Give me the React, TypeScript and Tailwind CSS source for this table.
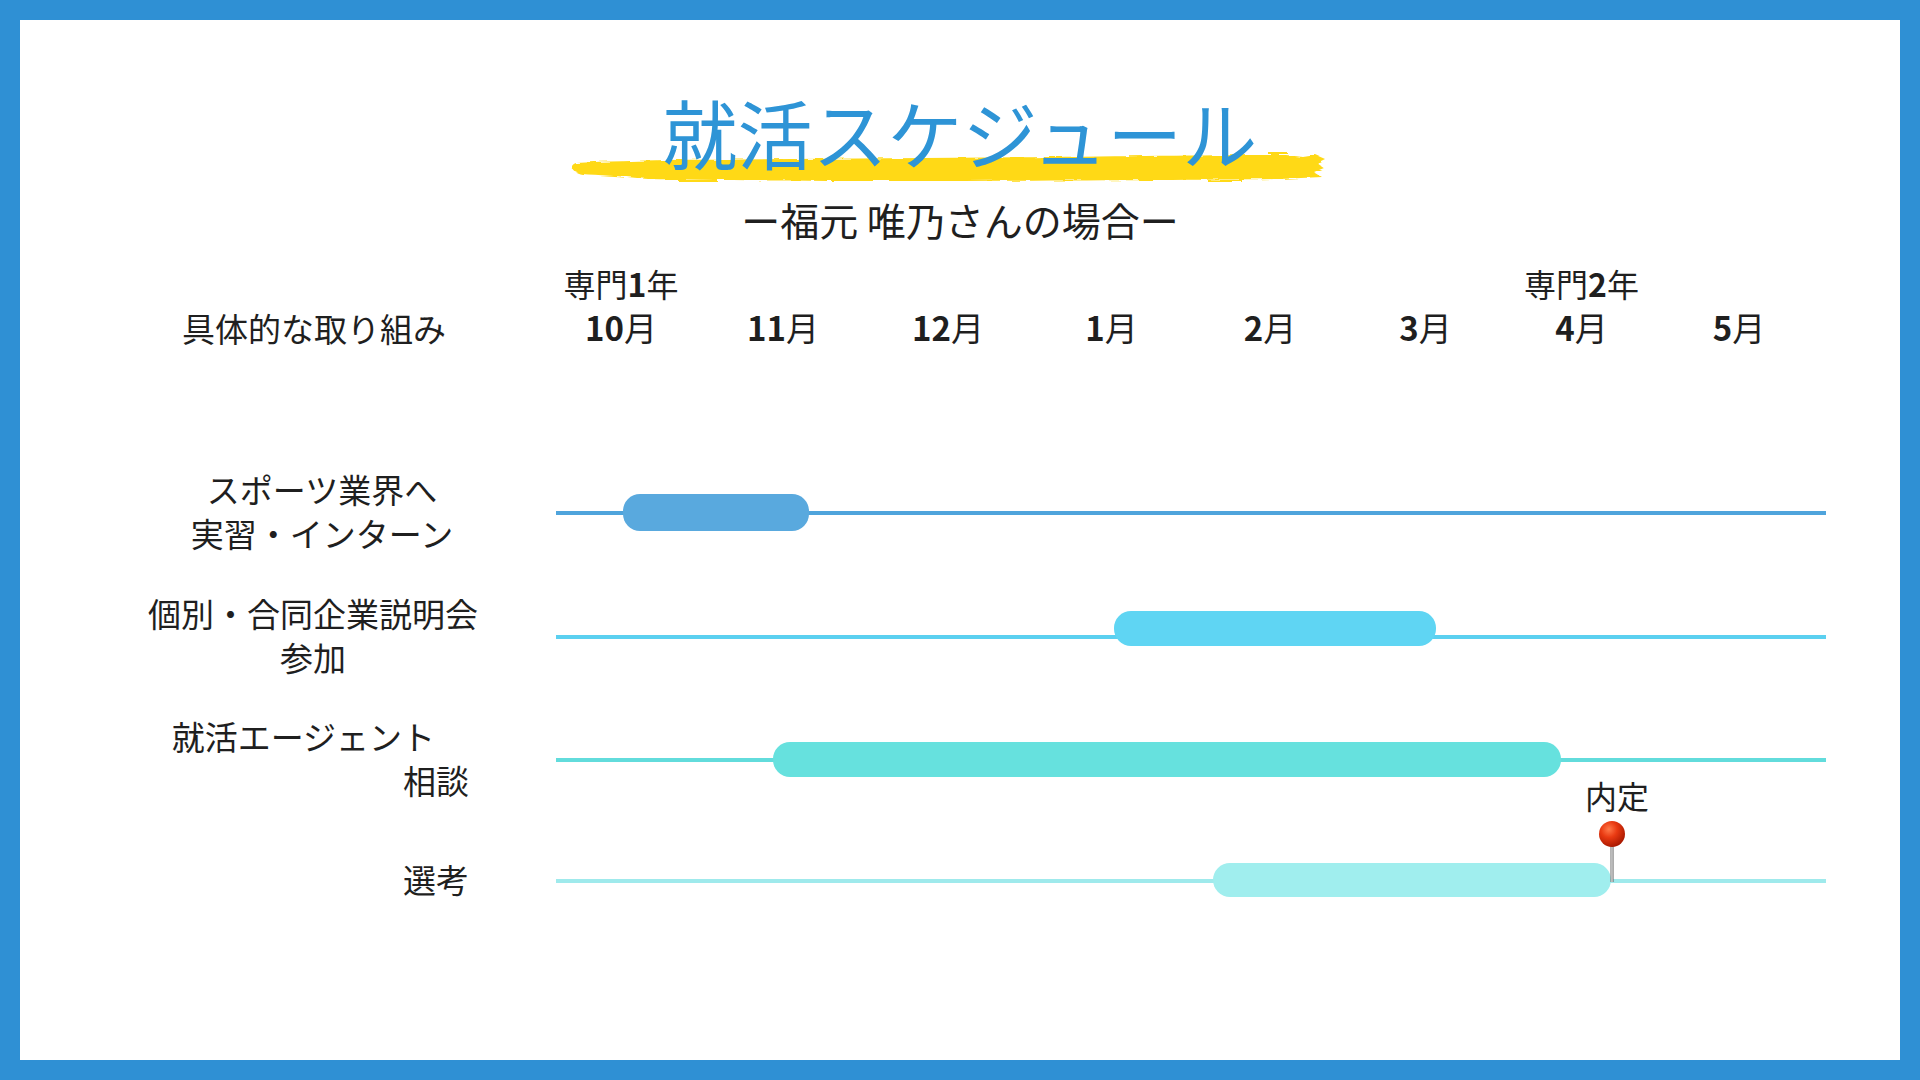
import React from 'react';

const jp = "font-['Noto_Sans_CJK_JP','Noto_Sans',sans-serif]";

type Row = {
  lines: { text: string; className?: string }[];
  labelClass: string;
  lineColor: string;
  barColor: string;
  left: number;
  width: number;
  offset: number;
  height: number;
  rowClass: string;
};

const rows: Row[] = [
  {
    lines: [{ text: 'スポーツ業界へ' }, { text: '実習・インターン' }],
    labelClass: 'ml-[122px] w-[360px] text-center',
    lineColor: '#4fa4dc',
    barColor: '#59a9de',
    left: 67,
    width: 186,
    offset: 0,
    height: 37,
    rowClass: 'h-[125px]',
  },
  {
    lines: [{ text: '個別・合同企業説明会' }, { text: '参加' }],
    labelClass: 'ml-[113px] w-[360px] text-center',
    lineColor: '#5bd0f0',
    barColor: '#5fd5f3',
    left: 558,
    width: 322,
    offset: -9,
    height: 35,
    rowClass: 'h-[124px]',
  },
  {
    lines: [{ text: '就活エージェント', className: 'pr-[34px]' }, { text: '相談' }],
    labelClass: 'w-[449px] text-right',
    lineColor: '#62dcdc',
    barColor: '#66e1de',
    left: 217,
    width: 788,
    offset: -1,
    height: 35,
    rowClass: 'h-[122px]',
  },
  {
    lines: [{ text: '選考' }],
    labelClass: 'w-[449px] text-right',
    lineColor: '#9feaec',
    barColor: '#a0eeee',
    left: 657,
    width: 398,
    offset: -1,
    height: 34,
    rowClass: 'h-[120px]',
  },
];

const months = ['10', '11', '12', '1', '2', '3', '4', '5'];

function Brush() {
  return (
    <svg
      width="760"
      height="34"
      viewBox="0 0 760 34"
      className="absolute left-[548px] top-[58px]"
    >
      <defs>
        <filter id="rough" x="-2%" y="-30%" width="104%" height="160%">
          <feTurbulence type="fractalNoise" baseFrequency="0.05 0.7" numOctaves="2" seed="3" />
          <feDisplacementMap in="SourceGraphic" scale="4" />
        </filter>
      </defs>
      <g fill="#ffd916" filter="url(#rough)">
        <path d="M8,11 C 40,9 70,9 100,8 C 220,7 360,6 480,5 C 580,4 660,3 718,3 L 735,5 L 748,3 L 757,7 L 749,11 L 756,16 L 746,20 L 754,25 L 712,27 C 620,28 480,29 340,29 C 220,29 140,28 80,27 C 50,24 30,23 14,22 C 3,20 1,13 8,11 Z" />
        <rect x="700" y="0" width="20" height="2" />
        <rect x="640" y="28" width="34" height="2" />
        <rect x="110" y="28" width="40" height="2" />
      </g>
    </svg>
  );
}

function Pin() {
  return (
    <svg width="30" height="62" viewBox="0 0 30 62">
      <defs>
        <linearGradient id="needle" x1="0" x2="1">
          <stop offset="0" stopColor="#6b6b6b" />
          <stop offset="0.5" stopColor="#e4e4e4" />
          <stop offset="1" stopColor="#5a5a5a" />
        </linearGradient>
        <radialGradient id="ball" cx="0.38" cy="0.32" r="0.7">
          <stop offset="0" stopColor="#ff7a4a" />
          <stop offset="0.45" stopColor="#e93a12" />
          <stop offset="1" stopColor="#a81800" />
        </radialGradient>
      </defs>
      <rect x="13.5" y="20" width="3" height="42" fill="url(#needle)" />
      <circle cx="15" cy="14" r="13" fill="url(#ball)" />
    </svg>
  );
}

export default function App() {
  return (
    <div className={`h-[1080px] w-[1920px] bg-[#2f90d4] p-[20px] text-[#1f1f1f] ${jp}`}>
      <div className="flex h-full w-full flex-col bg-white">
        {/* Title */}
        <div className="relative mt-[74px] flex justify-center">
          <Brush />
          <h1 className="relative text-[75px] font-normal leading-none text-[#2e94d6]">
            就活スケジュール
          </h1>
        </div>
        <p className="mt-[31px] text-center text-[39px] leading-none">ー福元 唯乃さんの場合ー</p>

        {/* Header */}
        <div className="mt-[28px] flex text-[32px] leading-none">
          <div className="w-[521px]" />
          <div className="grid grid-cols-[160px_164px_166px_161px_156px_155px_157px_158px] text-center">
            <span>
              専門<span className="font-bold">1</span>年
            </span>
            <span className="col-start-7">
              専門<span className="font-bold">2</span>年
            </span>
          </div>
        </div>
        <div className="mt-[11px] flex items-center leading-none">
          <div className="w-[521px] pl-[162px] pt-[2px] text-[33px]">具体的な取り組み</div>
          <div className="grid grid-cols-[160px_164px_166px_161px_156px_155px_157px_158px] text-center text-[33px]">
            {months.map((m) => (
              <span key={m}>
                <span className="font-bold">{m}</span>月
              </span>
            ))}
          </div>
        </div>

        {/* Rows */}
        <div className="mt-[105px] flex flex-col">
          {rows.map((r, i) => (
            <div key={i} className={`flex items-center ${r.rowClass}`}>
              <div className="w-[536px]">
                <div className={`-mt-[4px] text-[33px] leading-[44px] ${r.labelClass}`}>
                  {r.lines.map((l) => (
                    <div key={l.text} className={l.className}>
                      {l.text}
                    </div>
                  ))}
                </div>
              </div>
              <div className="relative h-full w-[1270px]">
                <div
                  className="absolute left-0 right-0 top-1/2 h-[4px] -translate-y-1/2"
                  style={{ backgroundColor: r.lineColor }}
                />
                <div
                  className="absolute top-1/2 rounded-[17px]"
                  style={{
                    left: r.left,
                    width: r.width,
                    height: r.height,
                    marginTop: r.offset - r.height / 2,
                    backgroundColor: r.barColor,
                  }}
                />
                {i === 3 && (
                  <>
                    <div className="absolute left-[1021px] top-[-42px] w-[80px] whitespace-nowrap text-center text-[32px] leading-none">
                      内定
                    </div>
                    <div className="absolute left-[1041px] top-[-1px]">
                      <Pin />
                    </div>
                  </>
                )}
              </div>
            </div>
          ))}
        </div>
      </div>
    </div>
  );
}
